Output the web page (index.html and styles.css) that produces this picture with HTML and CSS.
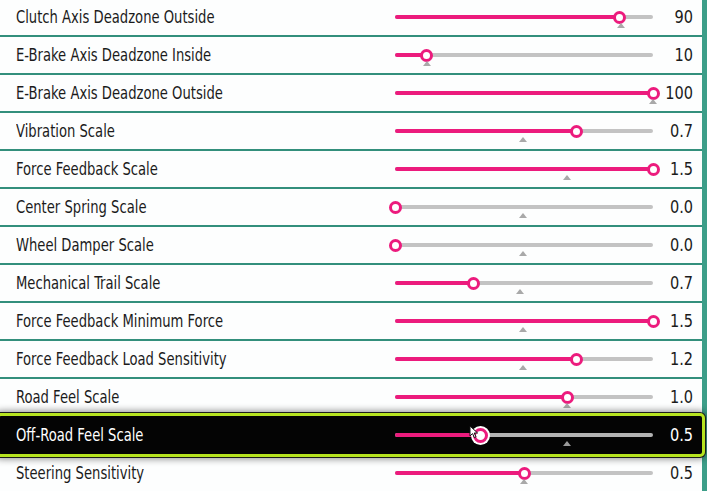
FILE: index.html
```html
<!DOCTYPE html>
<html lang="en">
<head>
<meta charset="utf-8">
<title>Advanced Wheel Settings</title>
<link rel="stylesheet" href="styles.css">
</head>
<body>
<div class="settings">
  <div class="row">
    <span class="label">Clutch Axis Deadzone Outside</span>
    <div class="slider"><div class="track"><div class="fill" style="width:87.2%"></div><span class="thumb" style="left:87.2%"></span><span class="mark" style="left:87.6%"></span></div></div>
    <span class="value">90</span>
  </div>
  <div class="row">
    <span class="label">E-Brake Axis Deadzone Inside</span>
    <div class="slider"><div class="track"><div class="fill" style="width:12.4%"></div><span class="thumb" style="left:12.4%"></span><span class="mark" style="left:12.4%"></span></div></div>
    <span class="value">10</span>
  </div>
  <div class="row">
    <span class="label">E-Brake Axis Deadzone Outside</span>
    <div class="slider"><div class="track"><div class="fill" style="width:100%"></div><span class="thumb" style="left:100%"></span><span class="mark" style="left:100%"></span></div></div>
    <span class="value">100</span>
  </div>
  <div class="row">
    <span class="label">Vibration Scale</span>
    <div class="slider"><div class="track"><div class="fill" style="width:70.2%"></div><span class="thumb" style="left:70.2%"></span><span class="mark" style="left:49.6%"></span></div></div>
    <span class="value">0.7</span>
  </div>
  <div class="row">
    <span class="label">Force Feedback Scale</span>
    <div class="slider"><div class="track"><div class="fill" style="width:100%"></div><span class="thumb" style="left:100%"></span><span class="mark" style="left:66.7%"></span></div></div>
    <span class="value">1.5</span>
  </div>
  <div class="row">
    <span class="label">Center Spring Scale</span>
    <div class="slider"><div class="track"><div class="fill" style="width:0%"></div><span class="thumb" style="left:0%"></span><span class="mark" style="left:49.6%"></span></div></div>
    <span class="value">0.0</span>
  </div>
  <div class="row">
    <span class="label">Wheel Damper Scale</span>
    <div class="slider"><div class="track"><div class="fill" style="width:0%"></div><span class="thumb" style="left:0%"></span><span class="mark" style="left:49.6%"></span></div></div>
    <span class="value">0.0</span>
  </div>
  <div class="row">
    <span class="label">Mechanical Trail Scale</span>
    <div class="slider"><div class="track"><div class="fill" style="width:30.6%"></div><span class="thumb" style="left:30.6%"></span><span class="mark" style="left:48.4%"></span></div></div>
    <span class="value">0.7</span>
  </div>
  <div class="row">
    <span class="label">Force Feedback Minimum Force</span>
    <div class="slider"><div class="track"><div class="fill" style="width:100%"></div><span class="thumb" style="left:100%"></span><span class="mark" style="left:49.6%"></span></div></div>
    <span class="value">1.5</span>
  </div>
  <div class="row">
    <span class="label">Force Feedback Load Sensitivity</span>
    <div class="slider"><div class="track"><div class="fill" style="width:70.2%"></div><span class="thumb" style="left:70.2%"></span><span class="mark" style="left:49.6%"></span></div></div>
    <span class="value">1.2</span>
  </div>
  <div class="row">
    <span class="label">Road Feel Scale</span>
    <div class="slider"><div class="track"><div class="fill" style="width:66.7%"></div><span class="thumb" style="left:66.7%"></span><span class="mark" style="left:66.7%"></span></div></div>
    <span class="value">1.0</span>
  </div>
  <div class="row row-selected">
    <span class="label">Off-Road Feel Scale</span>
    <div class="slider"><div class="track"><div class="fill" style="width:33.3%"></div><span class="thumb thumb-hover" style="left:33.3%"></span><span class="mark" style="left:66.7%"></span>
      <svg class="cursor" width="10" height="14" viewBox="0 0 10 14"><path d="M1 1 L1 11 L3.5 8.6 L5.4 12.6 L7 11.9 L5.2 8 L8.6 8 Z" fill="#fff" stroke="#111" stroke-width="1" stroke-linejoin="round"/></svg>
    </div></div>
    <span class="value">0.5</span>
  </div>
  <div class="row">
    <span class="label">Steering Sensitivity</span>
    <div class="slider"><div class="track"><div class="fill" style="width:50%"></div><span class="thumb" style="left:50%"></span><span class="mark" style="left:50%"></span></div></div>
    <span class="value">0.5</span>
  </div>
</div>
</body>
</html>
```
FILE: styles.css
```css
* { box-sizing: border-box; }

html, body {
  margin: 0;
  height: 100%;
}

body {
  background: #2f8f7a;
  overflow: hidden;
  font-family: "DejaVu Sans Condensed", "Liberation Sans", sans-serif;
  font-stretch: condensed;
  color: #1b1b1b;
}

.settings {
  display: flex;
  flex-direction: column;
  gap: 2px;
  margin-top: -1px;
  width: 707px;
  padding-right: 5px;
  background: linear-gradient(to right, #338f7c 0, #338f7c 702px, #3d9e89 702px);
}

.row {
  display: grid;
  grid-template-columns: 1fr 258px 40px;
  align-items: center;
  height: 36px;
  padding: 0 9px 0 16px;
  background: #fdfefe;
  font-size: 17px;
}

/* narrow grotesque look: squeeze the condensed face a little further */
.label,
.value {
  display: inline-block;
  white-space: nowrap;
}

.label {
  transform: scaleX(0.86);
  transform-origin: left center;
}

.value {
  text-align: right;
  transform: scaleX(0.95);
  transform-origin: right center;
}

.slider {
  height: 100%;
  display: flex;
  align-items: center;
}

.track {
  position: relative;
  width: 100%;
  height: 4px;
  border-radius: 2px;
  background: #c3c3c3;
}

.fill {
  height: 100%;
  border-radius: 2px;
  background: #ec1b7d;
}

.thumb {
  position: absolute;
  top: 50%;
  width: 13px;
  height: 13px;
  margin: -6.5px 0 0 -6.5px;
  border: 3px solid #ec1b7d;
  border-radius: 50%;
  background: #fff;
}

.mark {
  position: absolute;
  top: 8px;
  width: 0;
  height: 0;
  margin-left: -4px;
  border-left: 4px solid transparent;
  border-right: 4px solid transparent;
  border-bottom: 5px solid #a9a9a9;
}

/* focused row: black panel with lime frame, drawn over its neighbours */
.row-selected {
  position: relative;
  z-index: 2;
  height: 44px;
  margin: -4px -3px -4px -4px;
  padding: 0 9px 0 17px;
  border: 3px solid #b6e41f;
  border-radius: 5px;
  background: #040404;
  color: #fff;
  box-shadow: 0 0 0 1px #1c1c1c, 0 0 7px 2px rgba(0, 0, 0, 0.45);
}

.row-selected .track {
  background: #b3b3b3;
}

.row-selected .mark {
  border-bottom-color: #9a9a9a;
}

.thumb-hover {
  width: 15px;
  height: 15px;
  margin: -7.5px 0 0 -7.5px;
  box-shadow: 0 0 0 2px #fff;
}

.cursor {
  position: absolute;
  left: 28.5%;
  top: -8px;
  z-index: 1;
}
```
